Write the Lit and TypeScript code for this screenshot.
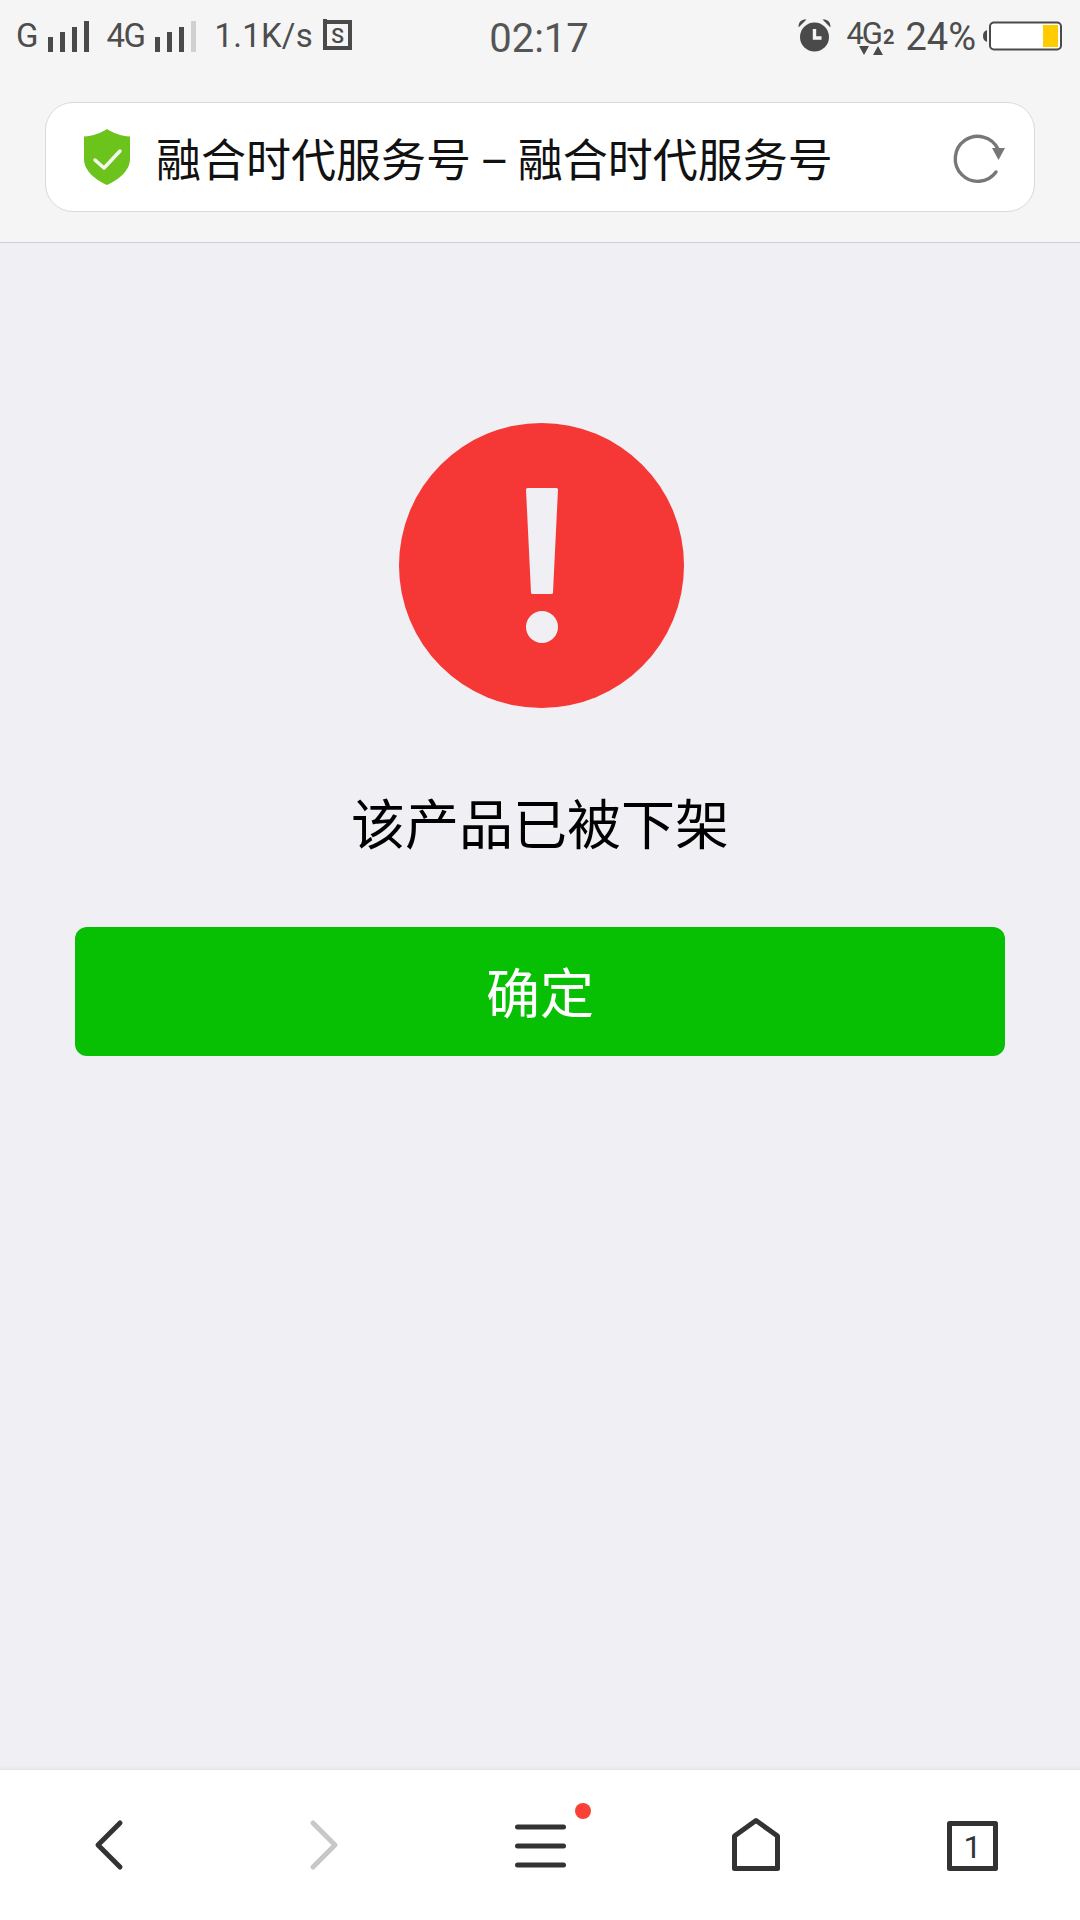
import { LitElement, html, css } from "lit";
import { customElement } from "lit/decorators.js";

const bars = (gray: boolean) => html`<svg class="sig" width="42" height="32" viewBox="0 0 42 32">
  <rect x="0" y="17" width="5" height="15" fill="#4a4a4a"/>
  <rect x="12" y="12" width="5" height="20" fill="#4a4a4a"/>
  <rect x="24" y="7" width="5" height="25" fill="#4a4a4a"/>
  <rect x="36" y="1" width="5" height="31" fill="${gray ? "#d0d0d0" : "#4a4a4a"}"/>
</svg>`;

@customElement("app-root")
export class AppRoot extends LitElement {
  static styles = css`
    :host { display: block; width: 1080px; height: 1920px; font-family: Roboto, "Noto Sans CJK SC", sans-serif; }
    .page { display: flex; flex-direction: column; height: 1920px; background: #efeff4; }
    .head { height: 243px; box-sizing: border-box; background: #f5f5f5; border-bottom: 1px solid #cfcfd1; display: flex; flex-direction: column; }
    .status { height: 76px; display: grid; grid-template-columns: 1fr 1fr 1fr; align-items: flex-start; color: #4d4d4d; padding: 0 18px 0 16px; box-sizing: border-box; }
    .sl, .sr { display: flex; align-items: flex-start; height: 76px; white-space: nowrap; }
    .sl { font-size: 33px; line-height: 38px; padding-top: 17px; box-sizing: border-box; }
    .sl svg { margin-top: 3px; flex: none; }
    .sr { justify-content: flex-end; padding-top: 17px; box-sizing: border-box; }
    .time { text-align: center; font-size: 40px; line-height: 46px; padding-top: 16px; color: #555; }
    .g1 { margin-right: 10px; }
    .g2 { margin: 0 10px 0 16px; letter-spacing: -1.5px; }
    .sp { margin: 0 9px 0 18px; letter-spacing: 0.2px; }
    .pct { font-size: 38px; line-height: 44px; margin: -2px 6px 0 10px; color: #4d4d4d; }
    .alarm { margin: 1px 14px 0 0; flex: none; }
    .net { position: relative; width: 49px; height: 38px; flex: none; white-space: nowrap; }
    .net-t { font-size: 31px; line-height: 34px; letter-spacing: -2px; display: block; }
    .net-t small { font-size: 20px; font-weight: 700; letter-spacing: 0; margin-left: 2px; }
    .net svg { position: absolute; left: 13px; top: 29px; }
    .url { margin: 26px 45px 0 45px; height: 110px; box-sizing: border-box; background: #fff; border: 1px solid #d9d9d9; border-radius: 28px; display: flex; align-items: center; padding-left: 37px; }
    .url .title { font-size: 45px; line-height: 60px; color: #111; margin-left: 25px; padding-top: 9px; white-space: nowrap; flex: 1; font-weight: 400; word-spacing: -2.5px; }
    .url .reload { margin-right: 28px; flex: none; }
    .main { flex: 1; display: flex; flex-direction: column; align-items: center; padding-top: 180px; }
    .circle { display: block; margin-left: 2px; }
    .msg { font-size: 54px; line-height: 72px; color: #000; margin-top: 83px; }
    .btn { margin-top: 64px; width: 930px; height: 129px; border-radius: 12px; background: #07c004; color: #fff; font-size: 54px; display: flex; align-items: center; justify-content: center; padding-bottom: 2px; box-sizing: border-box; }
    .nav { height: 151px; box-sizing: border-box; background: #fff; border-top: 1px solid #e6e6ea; display: grid; grid-template-columns: 213px 221px 212px 215px 60px; padding: 6px 0 0 81px; align-items: center; box-shadow: 0 -2px 3px rgba(0,0,0,0.03); }
    .nav svg { display: block; overflow: visible; }
  `;

  render() {
    return html`<div class="page">
      <div class="head">
        <div class="status">
          <div class="sl">
            <span class="g1">G</span>${bars(false)}
            <span class="g2">4G</span>${bars(true)}
            <span class="sp">1.1K/s</span>
            <svg width="30" height="32" viewBox="0 0 30 32" style="margin-top:1px">
              <path d="M3 1v3h25v26H3V4" fill="none" stroke="#4a4a4a" stroke-width="4"/>
              <text x="15.5" y="25" font-size="21" font-family="Roboto" font-weight="500" text-anchor="middle" fill="#4a4a4a">S</text>
            </svg>
          </div>
          <div class="time">02:17</div>
          <div class="sr">
            <svg class="alarm" width="35" height="34" viewBox="0 0 34 34">
              <circle cx="17" cy="19" r="14.5" fill="#4a4a4a"/>
              <path d="M1 9C1 3 5 1 9 1.5L1.5 9ZM33 9C33 3 29 1 25 1.5L32.5 9Z" fill="#4a4a4a"/>
              <path d="M17 11v9h7" fill="none" stroke="#f5f5f5" stroke-width="3.4"/>
            </svg>
            <div class="net">
              <span class="net-t">4G<small>2</small></span>
              <svg width="26" height="10" viewBox="0 0 26 10"><path d="M0 0h10L5 9zM14 9h10L19 0z" fill="#4a4a4a"/></svg>
            </div>
            <span class="pct">24%</span>
            <svg width="80" height="36" viewBox="0 0 80 36" style="flex:none">
              <path d="M5 13v12C2 24 1 22 1 19s1-5 4-6z" fill="#4a4a4a"/>
              <rect x="8" y="5.5" width="71" height="27" rx="4" fill="#fff" stroke="#4a4a4a" stroke-width="2"/>
              <rect x="61" y="8" width="15" height="22" fill="#ffcc00"/>
            </svg>
          </div>
        </div>
        <div class="url">
          <svg width="48" height="56" viewBox="0 0 48 56">
            <path d="M24 0C30 4 38 7 47 7.500V30C47 42 35 51 24 56 13 51 1 42 1 30V7.500C10 7 18 4 24 0Z" fill="#6cc31b"/>
            <path d="M12 31l9 8 16-17" fill="none" stroke="#fff" stroke-width="3.500" stroke-linecap="round" stroke-linejoin="round" opacity=".92"/>
          </svg>
          <div class="title">融合时代服务号 – 融合时代服务号</div>
          <svg class="reload" width="54" height="54" viewBox="0 0 54 54">
            <path d="M45 19A22.500 22.500 0 1 0 43 42" fill="none" stroke="#777" stroke-width="3.400" stroke-linecap="round" transform="translate(1 0)"/>
            <path d="M40 18H53L46.500 30Z" fill="#777"/>
          </svg>
        </div>
      </div>
      <div class="main">
        <svg class="circle" width="285" height="285" viewBox="0 0 285 285">
          <circle cx="142.500" cy="142.500" r="142.500" fill="#f53735"/>
          <path d="M127 66.500a1.500 1.500 0 0 1 1.500-1.500h29a1.500 1.500 0 0 1 1.500 1.500l-5 103a1.500 1.500 0 0 1-1.500 1.500h-19a1.500 1.500 0 0 1-1.500-1.500Z" fill="#efeff4"/>
          <circle cx="143" cy="204" r="16" fill="#efeff4"/>
        </svg>
        <div class="msg">该产品已被下架</div>
        <div class="btn">确定</div>
      </div>
      <div class="nav">
        <svg width="60" height="60" viewBox="0 0 60 60"><path d="M39 9L17 31l22 22" fill="none" stroke="#333" stroke-width="5" stroke-linecap="round" stroke-linejoin="round" transform="translate(0 -4)"/></svg>
        <svg width="60" height="60" viewBox="0 0 60 60"><path d="M19 5l22 22-22 22" fill="none" stroke="#c8c8c8" stroke-width="5" stroke-linecap="round" stroke-linejoin="round"/></svg>
        <svg width="60" height="60" viewBox="0 0 60 60">
          <g stroke="#333" stroke-width="5" stroke-linecap="round"><path d="M2.500 9H48.500"/><path d="M2.500 28H48.500"/><path d="M2.500 47H48.500"/></g>
          <circle cx="68" cy="-7" r="8" fill="#fb4038"/>
        </svg>
        <svg width="60" height="60" viewBox="0 0 60 60"><path d="M29 2.500L50.500 18V50.500H7.500V18Z" fill="none" stroke="#333" stroke-width="5" stroke-linejoin="round"/></svg>
        <svg width="60" height="60" viewBox="0 0 60 60">
          <rect x="7.500" y="5.500" width="46" height="45" fill="none" stroke="#333" stroke-width="5" stroke-linejoin="round"/>
          <text x="30.500" y="40" font-size="32" font-family="Roboto" text-anchor="middle" fill="#333">1</text>
        </svg>
      </div>
    </div>`;
  }
}
